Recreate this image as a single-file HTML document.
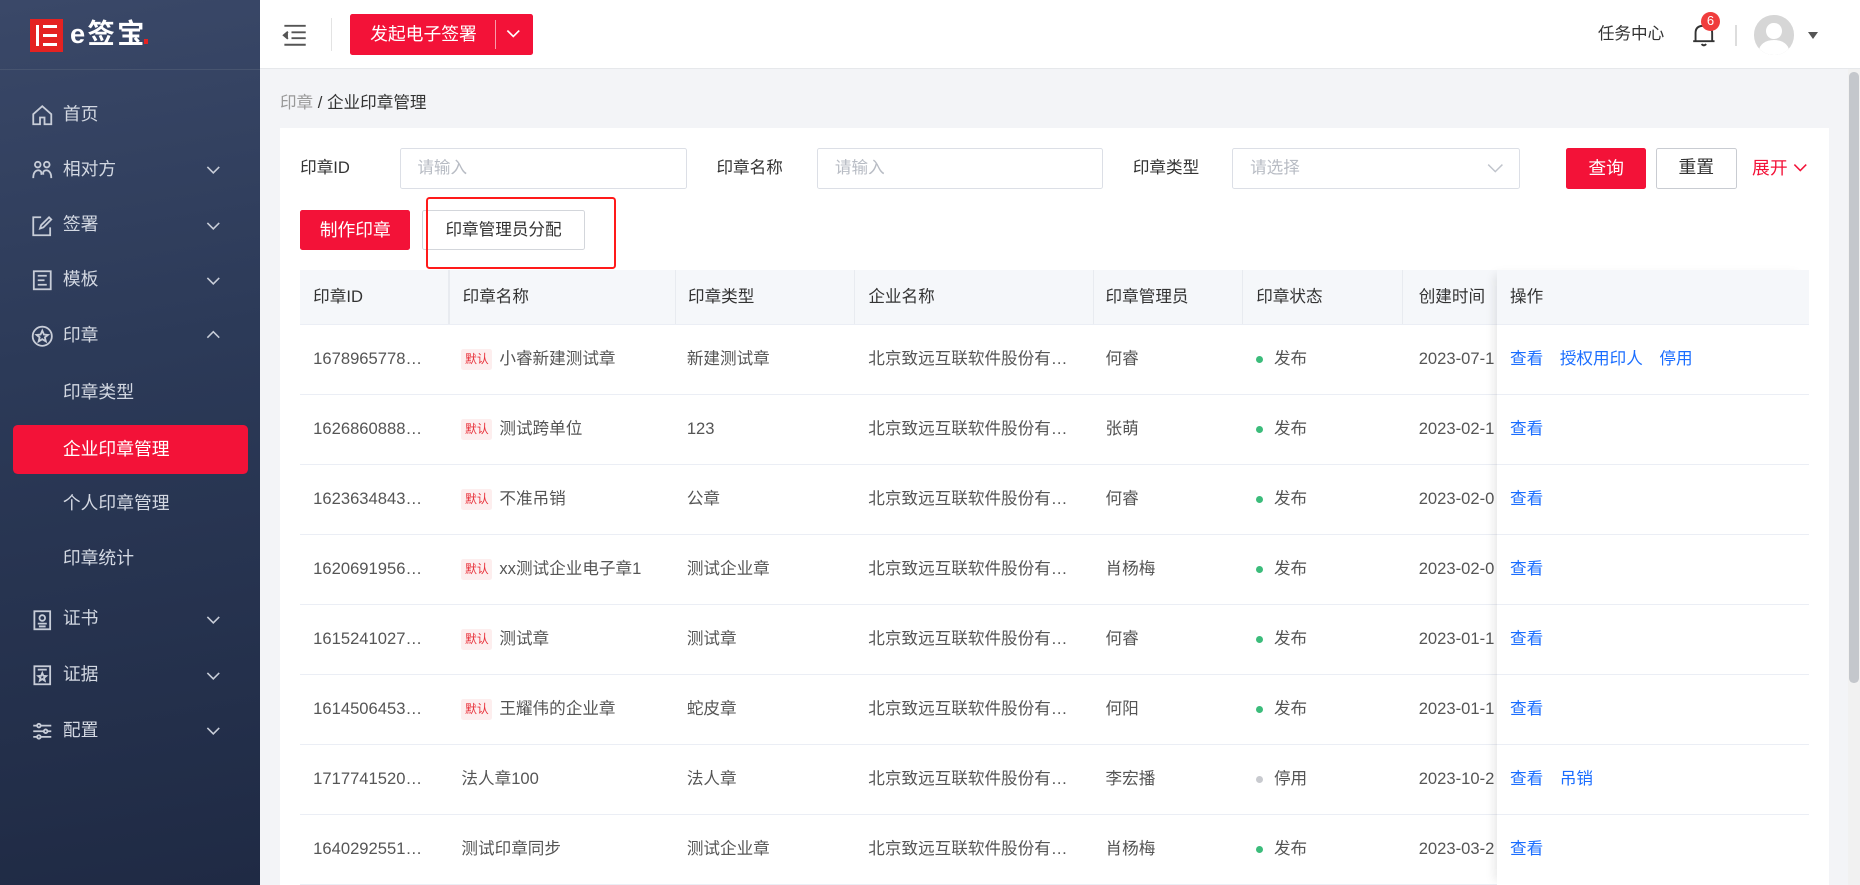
<!DOCTYPE html>
<html><head><meta charset="utf-8"><style>
*{box-sizing:border-box;margin:0;padding:0}
html,body{width:1860px;height:885px;overflow:hidden;background:#f3f4f7}
body{font-family:"Liberation Sans","Noto Sans CJK SC",sans-serif}
#w{zoom:1.18622;width:1568px;height:746px;position:relative;overflow:hidden;background:#f3f4f7;color:#333;font-size:14px}
.a{position:absolute}
#sb{left:0;top:0;width:219px;height:746px;background:linear-gradient(170deg,#3a4868 0%,#2c3a58 40%,#1f2a44 100%)}
.mi{position:absolute;left:0;width:219px;height:42px;line-height:42px;color:#d3d8e2;font-size:15px}
.mi .t{position:absolute;left:53px}
.mi .ic{position:absolute;left:26px;top:12px;width:19px;height:19px}
.mi .ch{position:absolute;left:173px;top:14px}
.sub .t{left:53px}
.tbl .c{position:absolute;white-space:nowrap;overflow:hidden}
.row{position:absolute;left:253px;width:1272px;height:59px;border-bottom:1px solid #ebeef5;background:#fff}
.row .c{top:0;line-height:58px;color:#555}
.tag{display:inline-block;background:#fdeeee;color:#e8313a;font-size:10px;line-height:18px;padding:0 3px;margin-right:6px;vertical-align:middle;border-radius:2px}
.dot{display:inline-block;width:6px;height:6px;border-radius:3px;background:#3cbc7b;margin-right:9px;vertical-align:middle}
.lk{color:#1a6dff;margin-right:14px}
.inp{position:absolute;top:125px;height:34px;border:1px solid #dcdfe6;border-radius:2px;background:#fff;color:#b8bcc4;line-height:32px;padding-left:14px}
.lbl{position:absolute;top:125px;line-height:34px;color:#333}
</style></head><body><div id="w">
<div id="sb" class="a">
  <div class="a" style="left:0;top:58px;width:219px;height:1px;background:#47546f"></div>
  <div class="a" style="left:25px;top:16px;width:28px;height:28px;background:#e42221"></div>
  <div class="a" style="left:30px;top:21px;width:3px;height:18px;background:#fff"></div>
  <div class="a" style="left:36px;top:21px;width:12px;height:3px;background:#fff"></div>
  <div class="a" style="left:36px;top:28.5px;width:12px;height:3px;background:#fff"></div>
  <div class="a" style="left:36px;top:36px;width:12px;height:3px;background:#fff"></div>
  <div class="a" style="left:59px;top:13px;color:#fff;font-size:23px;font-weight:bold;line-height:32px;letter-spacing:2px">e签宝</div>
  <div class="a" style="left:121px;top:33px;width:4px;height:4px;background:#e42221"></div>

  <div class="mi" style="top:76px"><svg class="ic" viewBox="0 0 20 20" fill="none" stroke="#c8cdd8" stroke-width="1.6"><path d="M2 9 L10 2 L18 9 V18 H12 V12 H8 V18 H2 Z"/></svg><span class="t">首页</span></div>
  <div class="mi" style="top:122px"><svg class="ic" viewBox="0 0 20 20" fill="none" stroke="#c8cdd8" stroke-width="1.6"><circle cx="6" cy="5" r="2.5"/><circle cx="14" cy="5" r="2.5"/><path d="M2 17 Q2 10 7 10 Q10 11 9 14 M11 14 Q10 10 14 10 Q18 11 18 17"/></svg><span class="t">相对方</span><svg class="ch" width="14" height="14" viewBox="0 0 14 14" fill="none" stroke="#c8cdd8" stroke-width="1.3"><path d="M2 5 L7 10 L12 5"/></svg></div>
  <div class="mi" style="top:169px"><svg class="ic" viewBox="0 0 20 20" fill="none" stroke="#c8cdd8" stroke-width="1.6"><path d="M9 2 H2 V18 H17 V11"/><path d="M8 12 L9 9 L16 2 L18 4 L11 11 Z"/></svg><span class="t">签署</span><svg class="ch" width="14" height="14" viewBox="0 0 14 14" fill="none" stroke="#c8cdd8" stroke-width="1.3"><path d="M2 5 L7 10 L12 5"/></svg></div>
  <div class="mi" style="top:215px"><svg class="ic" viewBox="0 0 20 20" fill="none" stroke="#c8cdd8" stroke-width="1.6"><rect x="2.5" y="2" width="15" height="16"/><path d="M6 6 H14 M6 10 H12 M6 14 H14"/></svg><span class="t">模板</span><svg class="ch" width="14" height="14" viewBox="0 0 14 14" fill="none" stroke="#c8cdd8" stroke-width="1.3"><path d="M2 5 L7 10 L12 5"/></svg></div>
  <div class="mi" style="top:262px"><svg class="ic" viewBox="0 0 20 20" fill="none" stroke="#c8cdd8" stroke-width="1.6"><circle cx="10" cy="10" r="8.5"/><path d="M10 5 L11.5 8.5 L15 8.8 L12.3 11 L13.2 14.5 L10 12.6 L6.8 14.5 L7.7 11 L5 8.8 L8.5 8.5 Z"/></svg><span class="t">印章</span><svg class="ch" width="14" height="14" viewBox="0 0 14 14" fill="none" stroke="#c8cdd8" stroke-width="1.3"><path d="M2 9 L7 4 L12 9"/></svg></div>
  <div class="mi sub" style="top:310px"><span class="t">印章类型</span></div>
  <div class="a" style="left:11px;top:358px;width:198px;height:42px;background:#f31238;border-radius:4px"></div>
  <div class="mi sub" style="top:358px;color:#fff"><span class="t">企业印章管理</span></div>
  <div class="mi sub" style="top:404px"><span class="t">个人印章管理</span></div>
  <div class="mi sub" style="top:450px"><span class="t">印章统计</span></div>
  <div class="mi" style="top:501px"><svg class="ic" viewBox="0 0 20 20" fill="none" stroke="#c8cdd8" stroke-width="1.6"><rect x="3" y="2" width="14" height="16"/><circle cx="10" cy="8" r="2.5"/><path d="M6 13 H14 M7 15.5 H13"/></svg><span class="t">证书</span><svg class="ch" width="14" height="14" viewBox="0 0 14 14" fill="none" stroke="#c8cdd8" stroke-width="1.3"><path d="M2 5 L7 10 L12 5"/></svg></div>
  <div class="mi" style="top:548px"><svg class="ic" viewBox="0 0 20 20" fill="none" stroke="#c8cdd8" stroke-width="1.6"><rect x="3" y="2" width="14" height="16"/><path d="M6 5 H14"/><path d="M10 8 L11 10.5 L13.5 10.7 L11.6 12.3 L12.2 14.8 L10 13.4 L7.8 14.8 L8.4 12.3 L6.5 10.7 L9 10.5 Z"/></svg><span class="t">证据</span><svg class="ch" width="14" height="14" viewBox="0 0 14 14" fill="none" stroke="#c8cdd8" stroke-width="1.3"><path d="M2 5 L7 10 L12 5"/></svg></div>
  <div class="mi" style="top:595px"><svg class="ic" viewBox="0 0 20 20" fill="none" stroke="#c8cdd8" stroke-width="1.6"><path d="M2 5 H18 M2 10 H18 M2 15 H18"/><circle cx="7" cy="5" r="1.6" fill="#2c3a58"/><circle cx="13" cy="10" r="1.6" fill="#2c3a58"/><circle cx="7" cy="15" r="1.6" fill="#2c3a58"/></svg><span class="t">配置</span><svg class="ch" width="14" height="14" viewBox="0 0 14 14" fill="none" stroke="#c8cdd8" stroke-width="1.3"><path d="M2 5 L7 10 L12 5"/></svg></div>
</div>

<!-- header -->
<div class="a" style="left:219px;top:0;width:1349px;height:58px;background:#fff;border-bottom:1px solid #e6e8eb"></div>
<svg class="a" style="left:238px;top:20px" width="21" height="19" viewBox="0 0 21 19" fill="none" stroke="#555" stroke-width="1.6"><path d="M2 1.5 H20 M8 7 H20 M8 12 H20 M2 17.5 H20"/><path d="M5 6.5 L1.5 9.5 L5 12.5" fill="#555"/></svg>
<div class="a" style="left:279px;top:15px;width:1px;height:28px;background:#e3e3e3"></div>
<div class="a" style="left:295px;top:12px;width:154px;height:34px;background:#f31238;border-radius:2px"></div>
<div class="a" style="left:312px;top:12px;line-height:34px;color:#fff;font-size:15px">发起电子签署</div>
<div class="a" style="left:417px;top:17px;width:1px;height:24px;background:#f89aaa"></div>
<svg class="a" style="left:426px;top:23px" width="14" height="12" viewBox="0 0 14 12" fill="none" stroke="#fff" stroke-width="1.4"><path d="M2 3 L7 8 L12 3"/></svg>
<div class="a" style="left:1347px;top:18px;line-height:22px;color:#333;font-size:14px">任务中心</div>
<svg class="a" style="left:1426px;top:18px" width="20" height="22" viewBox="0 0 20 22" fill="none" stroke="#333" stroke-width="1.6"><path d="M3 17 V10 Q3 4 10 4 Q17 4 17 10 V17 Z M1 17 H19"/><path d="M8 19.5 Q10 21.5 12 19.5"/></svg>
<div class="a" style="left:1434px;top:10px;width:16px;height:16px;border-radius:8px;background:#f03d3d;color:#fff;font-size:11px;line-height:16px;text-align:center">6</div>
<div class="a" style="left:1463px;top:21px;width:1px;height:18px;background:#ddd"></div>
<div class="a" style="left:1479px;top:13px;width:33px;height:33px;border-radius:50%;background:#d6d6d6;overflow:hidden">
 <div class="a" style="left:10px;top:6px;width:13px;height:14px;border-radius:50%;background:#fff"></div>
 <div class="a" style="left:4px;top:21px;width:25px;height:18px;border-radius:50%;background:#fff"></div>
</div>
<div class="a" style="left:1524px;top:27px;width:0;height:0;border-left:4.5px solid transparent;border-right:4.5px solid transparent;border-top:6px solid #555"></div>

<!-- scrollbar -->
<div class="a" style="left:1558px;top:58px;width:10px;height:688px;background:#f1f1f1"></div>
<div class="a" style="left:1559px;top:61px;width:8px;height:515px;background:#c4c7cc;border-radius:4px"></div>

<div class="a" style="left:236px;top:76px;line-height:22px;font-size:14px"><span style="color:#999">印章</span> / 企业印章管理</div>

<div class="a" style="left:236px;top:108px;width:1306px;height:640px;background:#fff"></div>
<div class="lbl" style="left:253px">印章ID</div>
<div class="inp" style="left:337px;width:242px">请输入</div>
<div class="lbl" style="left:604px">印章名称</div>
<div class="inp" style="left:689px;width:241px">请输入</div>
<div class="lbl" style="left:955px">印章类型</div>
<div class="inp" style="left:1039px;width:242px">请选择<svg class="a" style="left:214px;top:10px" width="14" height="12" viewBox="0 0 14 12" fill="none" stroke="#c0c4cc" stroke-width="1.2"><path d="M1 3 L7 9 L13 3"/></svg></div>
<div class="a" style="left:1320px;top:125px;width:68px;height:34px;background:#f31238;border-radius:2px;color:#fff;text-align:center;line-height:34px;font-size:15px">查询</div>
<div class="a" style="left:1396px;top:125px;width:68px;height:34px;border:1px solid #c9ccd2;border-radius:2px;color:#333;text-align:center;line-height:32px;font-size:15px">重置</div>
<div class="a" style="left:1477px;top:125px;line-height:34px;color:#f31238;font-size:15px">展开</div>
<svg class="a" style="left:1511px;top:136px" width="14" height="12" viewBox="0 0 14 12" fill="none" stroke="#f31238" stroke-width="1.3"><path d="M2 3 L7 8 L12 3"/></svg>

<div class="a" style="left:253px;top:177px;width:93px;height:34px;background:#f31238;border-radius:2px;color:#fff;text-align:center;line-height:34px;font-size:15px">制作印章</div>
<div class="a" style="left:356px;top:177px;width:137px;height:34px;border:1px solid #d3d6db;border-radius:2px;color:#333;text-align:center;line-height:32px;font-size:14px">印章管理员分配</div>
<div class="a" style="left:359px;top:166px;width:160px;height:61px;border:2px solid #ff1a1a;border-radius:3px"></div>

<!-- table -->
<div class="tbl">
<div class="a" style="left:253px;top:228px;width:1272px;height:46px;background:#f5f7fa;border-bottom:1px solid #ebeef5"></div>
<div class="a" style="left:378px;top:228px;width:1px;height:45px;background:#e8ebf0"></div>
<div class="a" style="left:569px;top:228px;width:1px;height:45px;background:#e8ebf0"></div>
<div class="a" style="left:720px;top:228px;width:1px;height:45px;background:#e8ebf0"></div>
<div class="a" style="left:921px;top:228px;width:1px;height:45px;background:#e8ebf0"></div>
<div class="a" style="left:1047px;top:228px;width:1px;height:45px;background:#e8ebf0"></div>
<div class="a" style="left:1182px;top:228px;width:1px;height:45px;background:#e8ebf0"></div>
<div class="c a" style="left:264px;top:228px;line-height:45px">印章ID</div>
<div class="c a" style="left:390px;top:228px;line-height:45px">印章名称</div>
<div class="c a" style="left:580px;top:228px;line-height:45px">印章类型</div>
<div class="c a" style="left:732px;top:228px;line-height:45px">企业名称</div>
<div class="c a" style="left:932px;top:228px;line-height:45px">印章管理员</div>
<div class="c a" style="left:1059px;top:228px;line-height:45px">印章状态</div>
<div class="c a" style="left:1196px;top:228px;line-height:45px">创建时间</div>
<div class="c a" style="left:1273px;top:228px;line-height:45px">操作</div>

<div class="row" style="top:274px"><div class="c" style="left:11px;width:110px;text-overflow:ellipsis">1678965778…</div><div class="c" style="left:136px"><span class="tag">默认</span>小睿新建测试章</div><div class="c" style="left:326px">新建测试章</div><div class="c" style="left:479px">北京致远互联软件股份有…</div><div class="c" style="left:679px">何睿</div><div class="c" style="left:806px"><span class="dot"></span>发布</div><div class="c" style="left:943px;width:66px">2023-07-1</div></div>
<div class="row" style="top:333px"><div class="c" style="left:11px">1626860888…</div><div class="c" style="left:136px"><span class="tag">默认</span>测试跨单位</div><div class="c" style="left:326px">123</div><div class="c" style="left:479px">北京致远互联软件股份有…</div><div class="c" style="left:679px">张萌</div><div class="c" style="left:806px"><span class="dot"></span>发布</div><div class="c" style="left:943px;width:66px">2023-02-1</div></div>
<div class="row" style="top:392px"><div class="c" style="left:11px">1623634843…</div><div class="c" style="left:136px"><span class="tag">默认</span>不准吊销</div><div class="c" style="left:326px">公章</div><div class="c" style="left:479px">北京致远互联软件股份有…</div><div class="c" style="left:679px">何睿</div><div class="c" style="left:806px"><span class="dot"></span>发布</div><div class="c" style="left:943px;width:66px">2023-02-0</div></div>
<div class="row" style="top:451px"><div class="c" style="left:11px">1620691956…</div><div class="c" style="left:136px"><span class="tag">默认</span>xx测试企业电子章1</div><div class="c" style="left:326px">测试企业章</div><div class="c" style="left:479px">北京致远互联软件股份有…</div><div class="c" style="left:679px">肖杨梅</div><div class="c" style="left:806px"><span class="dot"></span>发布</div><div class="c" style="left:943px;width:66px">2023-02-0</div></div>
<div class="row" style="top:510px"><div class="c" style="left:11px">1615241027…</div><div class="c" style="left:136px"><span class="tag">默认</span>测试章</div><div class="c" style="left:326px">测试章</div><div class="c" style="left:479px">北京致远互联软件股份有…</div><div class="c" style="left:679px">何睿</div><div class="c" style="left:806px"><span class="dot"></span>发布</div><div class="c" style="left:943px;width:66px">2023-01-1</div></div>
<div class="row" style="top:569px"><div class="c" style="left:11px">1614506453…</div><div class="c" style="left:136px"><span class="tag">默认</span>王耀伟的企业章</div><div class="c" style="left:326px">蛇皮章</div><div class="c" style="left:479px">北京致远互联软件股份有…</div><div class="c" style="left:679px">何阳</div><div class="c" style="left:806px"><span class="dot"></span>发布</div><div class="c" style="left:943px;width:66px">2023-01-1</div></div>
<div class="row" style="top:628px"><div class="c" style="left:11px">1717741520…</div><div class="c" style="left:136px">法人章100</div><div class="c" style="left:326px">法人章</div><div class="c" style="left:479px">北京致远互联软件股份有…</div><div class="c" style="left:679px">李宏播</div><div class="c" style="left:806px"><span class="dot" style="background:#c8cacf"></span>停用</div><div class="c" style="left:943px;width:66px">2023-10-2</div></div>
<div class="row" style="top:687px"><div class="c" style="left:11px">1640292551…</div><div class="c" style="left:136px">测试印章同步</div><div class="c" style="left:326px">测试企业章</div><div class="c" style="left:479px">北京致远互联软件股份有…</div><div class="c" style="left:679px">肖杨梅</div><div class="c" style="left:806px"><span class="dot"></span>发布</div><div class="c" style="left:943px;width:66px">2023-03-2</div></div>

<!-- fixed ops column -->
<div class="a" style="left:1262px;top:228px;width:263px;height:518px;box-shadow:-6px 0 8px -4px rgba(0,0,0,0.1)"></div>
<div class="a" style="left:1262px;top:228px;width:263px;height:45px;background:#f5f7fa"></div>
<div class="c a" style="left:1273px;top:228px;line-height:45px">操作</div>
<div class="a" style="left:1262px;top:274px;width:263px;height:472px;background:#fff"></div>
<div class="a" style="left:1262px;top:332px;width:263px;height:1px;background:#ebeef5"></div>
<div class="a" style="left:1262px;top:391px;width:263px;height:1px;background:#ebeef5"></div>
<div class="a" style="left:1262px;top:450px;width:263px;height:1px;background:#ebeef5"></div>
<div class="a" style="left:1262px;top:509px;width:263px;height:1px;background:#ebeef5"></div>
<div class="a" style="left:1262px;top:568px;width:263px;height:1px;background:#ebeef5"></div>
<div class="a" style="left:1262px;top:627px;width:263px;height:1px;background:#ebeef5"></div>
<div class="a" style="left:1262px;top:686px;width:263px;height:1px;background:#ebeef5"></div>
<div class="c a" style="left:1273px;top:274px;line-height:58px"><span class="lk">查看</span><span class="lk">授权用印人</span><span class="lk">停用</span></div>
<div class="c a" style="left:1273px;top:333px;line-height:58px"><span class="lk">查看</span></div>
<div class="c a" style="left:1273px;top:392px;line-height:58px"><span class="lk">查看</span></div>
<div class="c a" style="left:1273px;top:451px;line-height:58px"><span class="lk">查看</span></div>
<div class="c a" style="left:1273px;top:510px;line-height:58px"><span class="lk">查看</span></div>
<div class="c a" style="left:1273px;top:569px;line-height:58px"><span class="lk">查看</span></div>
<div class="c a" style="left:1273px;top:628px;line-height:58px"><span class="lk">查看</span><span class="lk">吊销</span></div>
<div class="c a" style="left:1273px;top:687px;line-height:58px"><span class="lk">查看</span></div>
</div>
</div></body></html>
